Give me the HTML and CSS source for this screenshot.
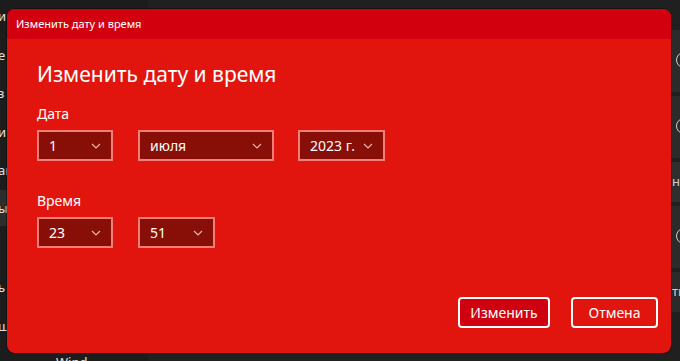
FILE: index.html
```html
<!DOCTYPE html>
<html lang="ru">
<head>
<meta charset="utf-8">
<link rel="stylesheet" href="styles.css">
</head>
<body>
<div class="page">
  <nav class="nav">
    <div class="nav-item">и</div>
    <div class="nav-item">е</div>
    <div class="nav-item">з</div>
    <div class="nav-item">и</div>
    <div class="nav-item nav-short">аг</div>
    <div class="nav-item nav-active">ы</div>
    <div class="nav-item nav-gap">ь</div>
    <div class="nav-item">щ</div>
    <div class="nav-foot">Wind</div>
  </nav>
  <main class="content">
    <div class="card card-a"><span class="knob"></span></div>
    <div class="card card-b"><span class="knob"></span></div>
    <div class="card card-c"><span class="edge-text">н</span></div>
    <div class="card card-d"><span class="knob"></span></div>
    <div class="card card-e"><span class="edge-text">ть</span></div>
  </main>
</div>

<div class="dialog">
  <div class="titlebar">Изменить дату и время</div>
  <div class="dialog-body">
    <h1 class="heading">Изменить дату и время</h1>
    <div class="field-label">Дата</div>
    <div class="row">
      <div class="combo combo-day"><span>1</span><svg class="chev" viewBox="0 0 10 6"><path d="M1 1l4 4 4-4"/></svg></div>
      <div class="combo combo-month"><span>июля</span><svg class="chev" viewBox="0 0 10 6"><path d="M1 1l4 4 4-4"/></svg></div>
      <div class="combo combo-year"><span>2023 г.</span><svg class="chev" viewBox="0 0 10 6"><path d="M1 1l4 4 4-4"/></svg></div>
    </div>
    <div class="field-label label-time">Время</div>
    <div class="row">
      <div class="combo combo-day"><span>23</span><svg class="chev" viewBox="0 0 10 6"><path d="M1 1l4 4 4-4"/></svg></div>
      <div class="combo combo-min"><span>51</span><svg class="chev" viewBox="0 0 10 6"><path d="M1 1l4 4 4-4"/></svg></div>
    </div>
    <div class="actions">
      <button class="btn btn-primary">Изменить</button>
      <button class="btn">Отмена</button>
    </div>
  </div>
</div>
</body>
</html>
```

FILE: styles.css
```css
html, body {
  margin: 0;
  padding: 0;
  width: 680px;
  height: 361px;
  overflow: hidden;
  background: #202020;
  font-family: "Noto Sans", "Open Sans", sans-serif;
  color: #fff;
}

.page {
  display: flex;
  width: 680px;
  height: 361px;
  overflow: hidden;
}

.nav {
  width: 148px;
  background: #1c1c1c;
  display: flex;
  flex-direction: column;
  padding-top: 6px;
  font-size: 13px;
  color: #e0e0e0;
  overflow: hidden;
}

.nav-item {
  flex-shrink: 0;
  height: 38.5px;
  line-height: 20px;
  margin-left: -2px;
}

.nav-short {
  height: 30px;
}

.nav-active {
  background: #2d2d2d;
  height: 36px;
  line-height: 36px;
}

.nav-gap {
  margin-top: 51px;
}

.nav-foot {
  flex-shrink: 0;
  margin-top: -2px;
  padding-left: 56px;
  line-height: 20px;
  font-size: 13px;
}

.content {
  flex: 1;
  display: flex;
  flex-direction: column;
  gap: 4px;
  padding: 30px 0 0 0;
}

.card {
  background: #2b2b2b;
  height: 62px;
  position: relative;
  flex-shrink: 0;
}

.card-c {
  height: 40px;
  background: #2f2f2f;
}

.card-e {
  height: 40px;
}

.knob {
  position: absolute;
  left: 528px;
  top: 22px;
  width: 14px;
  height: 14px;
  border: 1.5px solid #cfcfcf;
  border-radius: 50%;
}

.edge-text {
  position: absolute;
  left: 524px;
  top: 10px;
  font-size: 13px;
  color: #cfcfcf;
}

.dialog {
  position: absolute;
  left: 7px;
  top: 9px;
  width: 664px;
  height: 344px;
  border-radius: 8px;
  overflow: hidden;
  background: #e2150e;
  display: flex;
  flex-direction: column;
  box-shadow: 0 0 0 1px rgba(0,0,0,0.35);
}

.titlebar {
  height: 30px;
  background: #d2000f;
  font-size: 11px;
  line-height: 30px;
  padding-left: 9px;
  flex-shrink: 0;
}

.dialog-body {
  flex: 1;
  padding: 21px 0 0 30px;
  display: flex;
  flex-direction: column;
}

.heading {
  margin: 0;
  font-size: 21px;
  font-weight: 400;
  line-height: 28px;
}

.field-label {
  margin-top: 16px;
  font-size: 14px;
  line-height: 20px;
}

.label-time {
  margin-top: 30px;
}

.row {
  display: flex;
  gap: 25px;
  margin-top: 6px;
}

.combo {
  box-sizing: border-box;
  height: 31px;
  background: #870f07;
  border: 2px solid #f27e79;
  display: flex;
  align-items: center;
  justify-content: space-between;
  padding: 0 10px 0 10px;
  font-size: 14px;
}

.combo-day { width: 76px; }
.combo-month { width: 136px; }
.combo-year { width: 87px; margin-left: -1px; }
.combo-min { width: 77px; }

.chev {
  width: 10px;
  height: 6px;
  fill: none;
  stroke: #f0b0ac;
  stroke-width: 1.2;
}

.actions {
  margin-top: auto;
  margin-bottom: 25px;
  margin-right: 13px;
  display: flex;
  justify-content: flex-end;
  gap: 21px;
}

.btn {
  box-sizing: border-box;
  height: 31px;
  width: 92px;
  background: transparent;
  border: 2px solid #fff;
  border-radius: 4px;
  color: #fff;
  font-family: inherit;
  font-size: 14px;
  padding: 0;
}

.btn-primary {
  background: #cf0010;
}

.btn + .btn {
  width: 87px;
}
```
